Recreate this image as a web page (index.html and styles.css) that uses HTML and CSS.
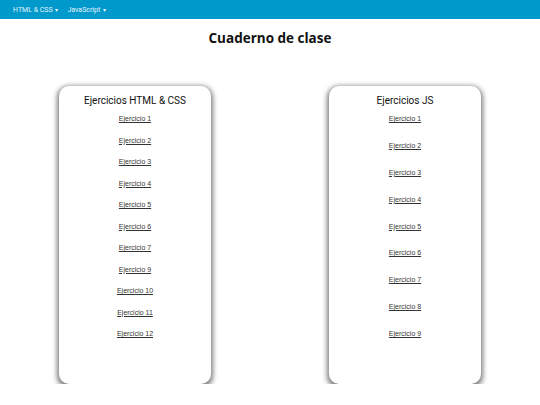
FILE: index.html
```html
<!DOCTYPE html>
<html lang="es">
<head>
<meta charset="utf-8">
<title>Cuaderno de clase</title>
<link rel="stylesheet" href="styles.css">
</head>
<body>
<nav class="navbar">
  <span class="nav-item">HTML &amp; CSS <span class="caret">▾</span></span>
  <span class="nav-item">JavaScript <span class="caret">▾</span></span>
</nav>
<h1 class="title">Cuaderno de clase</h1>
<main class="cards">
  <section class="card">
    <h2 class="card-title">Ejercicios HTML &amp; CSS</h2>
    <ul class="list">
      <li><a href="#">Ejercicio 1</a></li>
      <li><a href="#">Ejercicio 2</a></li>
      <li><a href="#">Ejercicio 3</a></li>
      <li><a href="#">Ejercicio 4</a></li>
      <li><a href="#">Ejercicio 5</a></li>
      <li><a href="#">Ejercicio 6</a></li>
      <li><a href="#">Ejercicio 7</a></li>
      <li><a href="#">Ejercicio 9</a></li>
      <li><a href="#">Ejercicio 10</a></li>
      <li><a href="#">Ejercicio 11</a></li>
      <li><a href="#">Ejercicio 12</a></li>
    </ul>
  </section>
  <section class="card">
    <h2 class="card-title">Ejercicios JS</h2>
    <ul class="list">
      <li><a href="#">Ejercicio 1</a></li>
      <li><a href="#">Ejercicio 2</a></li>
      <li><a href="#">Ejercicio 3</a></li>
      <li><a href="#">Ejercicio 4</a></li>
      <li><a href="#">Ejercicio 5</a></li>
      <li><a href="#">Ejercicio 6</a></li>
      <li><a href="#">Ejercicio 7</a></li>
      <li><a href="#">Ejercicio 8</a></li>
      <li><a href="#">Ejercicio 9</a></li>
    </ul>
  </section>
</main>
</body>
</html>
```

FILE: styles.css
```css
html, body {
  margin: 0;
  padding: 0;
  background: #ffffff;
}
body {
  font-family: Roboto, "Liberation Sans", sans-serif;
}
.navbar {
  height: 19px;
  background: #0099cc;
  display: flex;
  align-items: center;
  gap: 9px;
  padding-left: 13px;
}
.nav-item {
  color: #e6f4fa;
  font-size: 7px;
}
.caret {
  font-size: 6px;
  margin-left: 1px;
}
.title {
  margin: 10px 0 0 0;
  height: 57px;
  text-align: center;
  font-family: "Open Sans", sans-serif;
  font-weight: 700;
  font-size: 13.5px;
  line-height: 18px;
  color: #111;
}
.cards {
  display: grid;
  grid-template-columns: 1fr 1fr;
}
.card {
  justify-self: center;
  width: 152px;
  height: 298px;
  box-sizing: border-box;
  border-radius: 10px;
  box-shadow: 0 2px 5px 2px rgba(0, 0, 0, 0.5);
  padding-top: 8px;
  display: flex;
  flex-direction: column;
  align-items: center;
}
.card-title {
  margin: 0;
  font-family: Roboto, sans-serif;
  font-weight: 400;
  font-size: 10px;
  line-height: 13px;
  color: #111;
}
.list {
  list-style: none;
  margin: 8px 0 0 0;
  padding: 0;
  height: 223px;
  display: flex;
  flex-direction: column;
  justify-content: space-between;
  align-items: center;
}
.list li {
  line-height: 8px;
  font-size: 7px;
  font-family: "Liberation Sans", Arial, sans-serif;
}
.list a {
  color: #333;
  text-decoration: underline;
}
```
